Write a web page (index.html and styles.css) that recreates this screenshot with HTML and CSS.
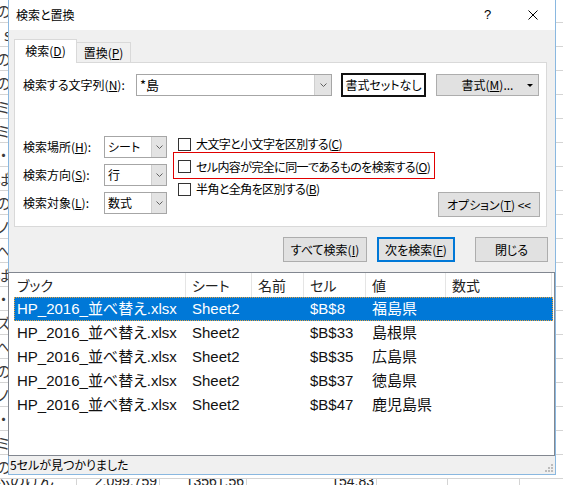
FILE: index.html
```html
<!DOCTYPE html>
<html lang="ja">
<head>
<meta charset="utf-8">
<title>検索と置換</title>
<link rel="stylesheet" href="styles.css">
</head>
<body>
<div class="sheet">
  <div class="sheet-row"><span class="frag"><span>の</span></span></div>
  <div class="sheet-row"><span class="frag"><span>s</span></span></div>
  <div class="sheet-row"><span class="frag"><span>の</span></span></div>
  <div class="sheet-row"><span class="frag"><span>の</span></span></div>
  <div class="sheet-row"><span class="frag"><span>ミ</span></span></div>
  <div class="sheet-row"><span class="frag"><span>ミ</span></span></div>
  <div class="sheet-row"><span class="frag"><span>・</span></span></div>
  <div class="sheet-row"><span class="frag"><span>ぱ</span></span></div>
  <div class="sheet-row"><span class="frag"><span>の</span></span></div>
  <div class="sheet-row"><span class="frag"><span>ノ</span></span></div>
  <div class="sheet-row"><span class="frag"><span>へ</span></span></div>
  <div class="sheet-row"><span class="frag"><span>ぱ</span></span></div>
  <div class="sheet-row"><span class="frag"><span>・</span></span></div>
  <div class="sheet-row"><span class="frag"><span>ズ</span></span></div>
  <div class="sheet-row"><span class="frag"><span>へ</span></span></div>
  <div class="sheet-row"><span class="frag"><span>の</span></span></div>
  <div class="sheet-row"><span class="frag"><span>ノ</span></span></div>
  <div class="sheet-row"><span class="frag"><span>・</span></span></div>
  <div class="sheet-row"><span class="frag"><span>ミ</span></span></div>
  <div class="sheet-row"><span class="frag"><span>の</span></span></div>
  <div class="sheet-row data">
    <span class="cell ca"><span class="jp">ぶのけん</span></span>
    <span class="cell cb">2,099,759</span>
    <span class="cell cc">13561.56</span>
    <span class="cell cd">154.83</span>
    <span class="cell ce"></span>
    <span class="cell cf"></span>
    <span class="cell cg"></span>
  </div>
</div>

<div class="dialog">
  <div class="titlebar">
    <span class="title">検索と置換</span>
    <span class="help">?</span>
    <span class="close"><svg width="10" height="10" viewBox="0 0 10 10"><path d="M0.5 0.5 L9.5 9.5 M9.5 0.5 L0.5 9.5" stroke="#000" stroke-width="1" fill="none"/></svg></span>
  </div>

  <div class="body">
    <div class="tabs">
      <div class="tab active">検索(<u>D</u>)</div>
      <div class="tab">置換(<u>P</u>)</div>
    </div>
    <div class="panel">
      <div class="find-row">
        <span class="find-label">検索する文字列(<u>N</u>):</span>
        <div class="combo">
          <span class="combo-text">*島</span>
          <span class="drop"><svg width="7" height="4" viewBox="0 0 7 4"><polyline points="0.5,0.5 3.5,3.5 6.5,0.5" stroke="#606060" fill="none"/></svg></span>
        </div>
        <div class="fmt-preview">書式セットなし</div>
        <div class="btn fmt-btn">書式(<u>M</u>)...<span class="caret"></span></div>
      </div>

      <div class="opts">
        <div class="opt-grid">
          <span class="opt-label">検索場所(<u>H</u>):</span>
          <div class="sel"><span class="sel-text">シート</span><span class="drop"><svg width="7" height="4" viewBox="0 0 7 4"><polyline points="0.5,0.5 3.5,3.5 6.5,0.5" stroke="#606060" fill="none"/></svg></span></div>
          <span class="opt-label">検索方向(<u>S</u>):</span>
          <div class="sel"><span class="sel-text">行</span><span class="drop"><svg width="7" height="4" viewBox="0 0 7 4"><polyline points="0.5,0.5 3.5,3.5 6.5,0.5" stroke="#606060" fill="none"/></svg></span></div>
          <span class="opt-label">検索対象(<u>L</u>):</span>
          <div class="sel"><span class="sel-text">数式</span><span class="drop"><svg width="7" height="4" viewBox="0 0 7 4"><polyline points="0.5,0.5 3.5,3.5 6.5,0.5" stroke="#606060" fill="none"/></svg></span></div>
        </div>
        <div class="checks">
          <div class="check"><span class="box"></span>大文字と小文字を区別する(<u>C</u>)</div>
          <div class="check"><span class="box"></span>セル内容が完全に同一であるものを検索する(<u>O</u>)</div>
          <div class="check"><span class="box"></span>半角と全角を区別する(<u>B</u>)</div>
        </div>
        <div class="btn opt-btn">オプション(<u>T</u>) &lt;&lt;</div>
      </div>

      <div class="highlight"></div>
    </div>

    <div class="actions">
      <div class="btn act-all">すべて検索(<u>I</u>)</div>
      <div class="btn act-next">次を検索(<u>F</u>)</div>
      <div class="btn act-close">閉じる</div>
    </div>
  </div>

  <div class="results">
    <div class="res-head">
      <span class="hc">ブック</span>
      <span class="hc">シート</span>
      <span class="hc">名前</span>
      <span class="hc">セル</span>
      <span class="hc">値</span>
      <span class="hc">数式</span>
    </div>
    <div class="res-rows">
      <div class="res-row selected"><span>HP_2016_並べ替え.xlsx</span><span>Sheet2</span><span></span><span>$B$8</span><span>福島県</span><span></span></div>
      <div class="res-row"><span>HP_2016_並べ替え.xlsx</span><span>Sheet2</span><span></span><span>$B$33</span><span>島根県</span><span></span></div>
      <div class="res-row"><span>HP_2016_並べ替え.xlsx</span><span>Sheet2</span><span></span><span>$B$35</span><span>広島県</span><span></span></div>
      <div class="res-row"><span>HP_2016_並べ替え.xlsx</span><span>Sheet2</span><span></span><span>$B$37</span><span>徳島県</span><span></span></div>
      <div class="res-row"><span>HP_2016_並べ替え.xlsx</span><span>Sheet2</span><span></span><span>$B$47</span><span>鹿児島県</span><span></span></div>
    </div>
  </div>

  <div class="status">
    <span class="status-text">5セルが見つかりました</span>
    <svg class="grip" width="8" height="8" viewBox="0 0 8 8">
      <rect x="6" y="0" width="2" height="2" fill="#bcbcbc"/>
      <rect x="3" y="3" width="2" height="2" fill="#bcbcbc"/>
      <rect x="6" y="3" width="2" height="2" fill="#bcbcbc"/>
      <rect x="0" y="6" width="2" height="2" fill="#bcbcbc"/>
      <rect x="3" y="6" width="2" height="2" fill="#bcbcbc"/>
      <rect x="6" y="6" width="2" height="2" fill="#bcbcbc"/>
    </svg>
  </div>
</div>
</body>
</html>
```

FILE: styles.css
```css
* { box-sizing: border-box; }

html, body {
  margin: 0;
  padding: 0;
}

body {
  width: 563px;
  height: 485px;
  overflow: hidden;
  position: relative;
  background: #ffffff;
  font-family: "Noto Sans CJK JP", sans-serif;
  font-feature-settings: "palt";
  color: #000;
}

/* ---------- spreadsheet behind the dialog ---------- */
.sheet {
  margin-top: -1px;
}

.sheet-row {
  height: 24px;
  border-bottom: 1px solid #d4d4d4;
  display: flex;
}

.frag {
  width: 8px;
  height: 23px;
  overflow: hidden;
  display: flex;
  justify-content: flex-end;
  align-items: center;
  font-size: 15px;
  line-height: 18px;
  color: #3a3a3a;
  font-feature-settings: normal;
}

.frag span {
  flex: none;
  margin-right: -3px;
}

.sheet-row.data {
  border-bottom: none;
}

.cell {
  height: 24px;
  border-right: 1px solid #d4d4d4;
  font-family: "Liberation Sans", "Noto Sans CJK JP", sans-serif;
  font-size: 14px;
  line-height: 4px;
  text-align: right;
  padding-right: 2px;
  color: #222;
  overflow: hidden;
}

.ca { width: 77px; text-align: left; padding: 0; }
.ca .jp { display: block; margin-left: -4px; font-family: "Noto Sans CJK JP", sans-serif; font-size: 15px; line-height: 2px; }
.cb { width: 83px; }
.cc { width: 87px; }
.cd { width: 130px; }
.ce { width: 71px; }
.cf { width: 72px; }
.cg { flex: 1; border-right: none; }

/* ---------- dialog window ---------- */
.dialog {
  position: absolute;
  left: 8px;
  top: 0;
  width: 548px;
  height: 475px;
  border: 1px solid #8ab8e0;
  border-top: none;
  background: #f0f0f0;
  display: flex;
  flex-direction: column;
  font-size: 12px;
}

u { text-decoration: underline; text-underline-offset: 1px; }

.titlebar {
  flex: none;
  height: 30px;
  background: #ffffff;
  display: flex;
  align-items: center;
  padding-left: 7px;
}

.title {
  flex: 1;
  font-size: 12px;
  line-height: 16px;
}

.help {
  width: 45px;
  text-align: center;
  font-family: "Liberation Sans", sans-serif;
  font-size: 13px;
  line-height: 16px;
}

.close {
  width: 45px;
  height: 30px;
  display: flex;
  align-items: center;
  justify-content: center;
}

.body {
  flex: none;
  height: 242px;
  padding: 9px 8px 0 5px;
}

.tabs {
  height: 23px;
  display: flex;
  align-items: flex-end;
  position: relative;
  z-index: 1;
}

.tab {
  height: 20px;
  width: 54px;
  border: 1px solid #d9d9d9;
  border-bottom: none;
  border-left: none;
  background: #f0f0f0;
  text-align: center;
  line-height: 19px;
}

.tab.active {
  width: 63px;
  height: 24px;
  margin-bottom: -1px;
  background: #ffffff;
  border-left: 1px solid #d9d9d9;
  line-height: 22px;
}

.panel {
  position: relative;
  height: 165px;
  background: #ffffff;
  border: 1px solid #d9d9d9;
  padding: 10px 6px 0 8px;
}

.find-row {
  height: 24px;
  display: flex;
  align-items: center;
}

.find-label {
  width: 113px;
  line-height: 16px;
}

.combo, .sel {
  height: 22px;
  border: 1px solid #a6a6a6;
  background: #fff;
  display: flex;
}

.combo { width: 196px; }

.combo-text {
  flex: 1;
  padding-left: 3px;
  font-size: 13px;
  line-height: 20px;
}

.drop {
  width: 17px;
  background: #e3e3e3;
  border-left: 1px solid #cfcfcf;
  display: flex;
  align-items: center;
  justify-content: center;
}

.fmt-preview {
  margin-left: 9px;
  width: 85px;
  height: 24px;
  border: 2px solid #111;
  background: #fff;
  display: flex;
  align-items: center;
  justify-content: center;
  line-height: 16px;
}

.btn {
  height: 25px;
  background: #e1e1e1;
  border: 1px solid #adadad;
  display: flex;
  align-items: center;
  justify-content: center;
  line-height: 16px;
  white-space: nowrap;
}

.fmt-btn {
  margin-left: 10px;
  width: 103px;
  height: 22px;
  position: relative;
}

.caret {
  position: absolute;
  right: 5px;
  top: 9px;
  width: 0;
  height: 0;
  border-left: 3px solid transparent;
  border-right: 3px solid transparent;
  border-top: 3px solid #000;
}

.opts {
  margin-top: 36px;
  height: 84px;
  display: flex;
  align-items: flex-start;
}

.opt-grid {
  flex: none;
  margin-top: 3px;
  display: grid;
  grid-template-columns: 81px 63px;
  grid-auto-rows: 22px;
  row-gap: 6px;
  align-items: center;
}

.opt-label { line-height: 16px; white-space: nowrap; }

.sel .sel-text {
  flex: 1;
  padding-left: 3px;
  line-height: 20px;
}

.sel .drop { width: 15px; }

.checks {
  flex: none;
  margin-left: 11px;
  display: flex;
  flex-direction: column;
}

.check {
  height: 22.5px;
  display: flex;
  align-items: center;
  line-height: 16px;
  white-space: nowrap;
  letter-spacing: -0.6px;
}

.box {
  width: 13px;
  height: 13px;
  border: 1px solid #333;
  background: #fff;
  margin-right: 5px;
  flex: none;
}

.opt-btn {
  flex: none;
  margin-left: auto;
  align-self: flex-end;
  width: 102px;
  height: 25px;
}

.highlight {
  position: absolute;
  left: 158px;
  top: 89px;
  width: 262px;
  height: 27px;
  border: 1px solid #e00000;
  pointer-events: none;
}

.actions {
  margin-top: 10px;
  margin-right: -1px;
  display: flex;
  justify-content: flex-end;
}

.act-all { width: 84px; }
.act-next { width: 78px; margin-left: 10px; border: 2px solid #0078d7; }
.act-close { width: 73px; margin-left: 20px; }

/* ---------- results list ---------- */
.results {
  flex: none;
  height: 184px;
  margin-left: -1px;
  background: #ffffff;
  border: 1px solid #828790;
  font-family: "Liberation Sans", "Noto Sans CJK JP", sans-serif;
  font-size: 15px;
  position: relative;
}

.res-head {
  height: 24px;
  display: grid;
  grid-template-columns: 177px 66px 52px 62px 80px 106px;
}

.hc {
  border-right: 1px solid #e5e5e5;
  padding-left: 6px;
  line-height: 24px;
  color: #222;
  font-family: "Noto Sans CJK JP", sans-serif;
  font-size: 14px;
}

.hc:first-child { padding-left: 8px; }

.res-rows {
  margin-left: 5px;
  margin-right: 1px;
}

.res-row {
  height: 24px;
  display: grid;
  grid-template-columns: 172px 66px 52px 62px 80px 1fr;
  line-height: 24px;
  color: #111;
  white-space: nowrap;
}

.res-row span { padding-left: 6px; overflow: hidden; }
.res-row span:first-child { padding-left: 3px; }

.res-row.selected {
  background: #0078d7;
  color: #ffffff;
  outline: 1px dotted #e9a23b;
  outline-offset: -1px;
}

/* ---------- status bar ---------- */
.status {
  flex: none;
  height: 18px;
  display: flex;
  align-items: center;
  padding-left: 1px;
  padding-right: 2px;
}

.status-text {
  flex: 1;
  line-height: 16px;
}

.grip {
  align-self: flex-end;
  margin-bottom: 2px;
}
```
